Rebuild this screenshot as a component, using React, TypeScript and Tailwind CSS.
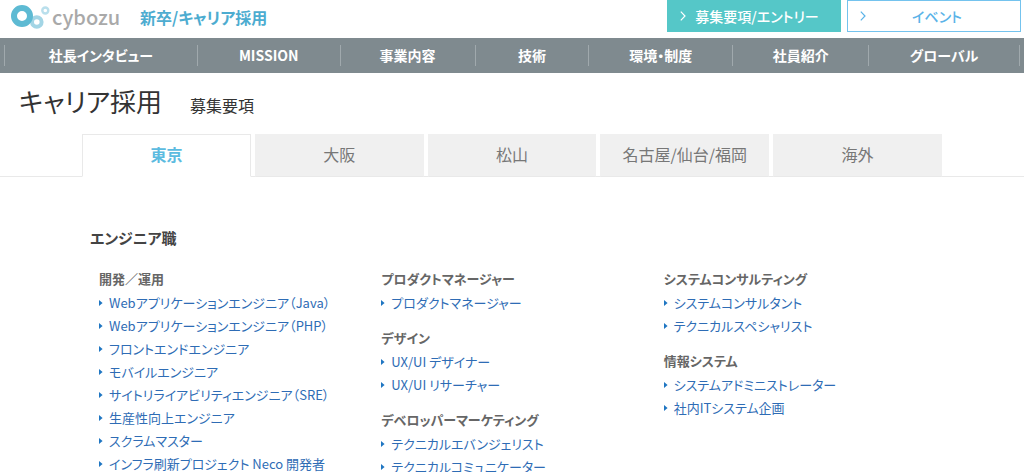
const navItems = ["社長インタビュー", "MISSION", "事業内容", "技術", "環境・制度", "社員紹介", "グローバル"];

const tabs = ["東京", "大阪", "松山", "名古屋/仙台/福岡", "海外"];

type Group = { title: string; links: string[] };

const columns: Group[][] = [
  [
    {
      title: "開発／運用",
      links: [
        "Webアプリケーションエンジニア（Java）",
        "Webアプリケーションエンジニア（PHP）",
        "フロントエンドエンジニア",
        "モバイルエンジニア",
        "サイトリライアビリティエンジニア（SRE）",
        "生産性向上エンジニア",
        "スクラムマスター",
        "インフラ刷新プロジェクト Neco 開発者",
      ],
    },
  ],
  [
    { title: "プロダクトマネージャー", links: ["プロダクトマネージャー"] },
    { title: "デザイン", links: ["UX/UI デザイナー", "UX/UI リサーチャー"] },
    {
      title: "デベロッパーマーケティング",
      links: ["テクニカルエバンジェリスト", "テクニカルコミュニケーター"],
    },
  ],
  [
    {
      title: "システムコンサルティング",
      links: ["システムコンサルタント", "テクニカルスペシャリスト"],
    },
    {
      title: "情報システム",
      links: ["システムアドミニストレーター", "社内ITシステム企画"],
    },
  ],
];

function Logo() {
  return (
    <a href="#" className="flex items-center gap-0.5 text-[#a9a9a9]">
      <svg width="40" height="26" viewBox="0 0 40 26" fill="none" aria-hidden="true">
        <circle cx="26.8" cy="18" r="4.8" stroke="#a3d5e5" strokeWidth="4" />
        <circle cx="12" cy="12" r="8" stroke="#5dbad3" strokeWidth="6" />
        <circle cx="35.3" cy="6.5" r="3" stroke="#b9dfec" strokeWidth="2.4" />
      </svg>
      <span className="text-[20px] leading-6 font-medium">cybozu</span>
    </a>
  );
}

function Chevron() {
  return (
    <svg width="6" height="10" viewBox="0 0 6 10" fill="none" stroke="currentColor" strokeWidth="1.2" aria-hidden="true">
      <path d="M0.8 0.6 5 5 0.8 9.4" />
    </svg>
  );
}

function HeaderButton({ label, filled }: { label: string; filled?: boolean }) {
  return (
    <a
      href="#"
      className={
        "flex h-8 w-[174px] items-center border px-3 text-[14px] font-medium " +
        (filled ? "border-[#55c7c8] bg-[#55c7c8] text-white" : "border-[#74c3ee] bg-white text-[#5ab3e8]")
      }
    >
      <Chevron />
      <span className="flex-1 text-center">{label}</span>
    </a>
  );
}

function JobGroup({ title, links }: Group) {
  return (
    <section className="mb-3 last:mb-0">
      <h3 className="text-[13px] leading-6 font-bold text-[#666]">{title}</h3>
      <ul>
        {links.map((link) => (
          <li key={link}>
            <a href="#" className="flex items-center gap-1.5 text-[13px] leading-[23px] whitespace-nowrap text-[#2e6cb5]">
              <svg width="4" height="6" viewBox="0 0 4 6" className="fill-[#1f76c2]" aria-hidden="true">
                <path d="M0 0 3.6 3 0 6Z" />
              </svg>
              {link}
            </a>
          </li>
        ))}
      </ul>
    </section>
  );
}

export default function App() {
  return (
    <div className="bg-white font-['Noto_Sans_CJK_JP',sans-serif] text-[#333] [font-feature-settings:'palt']">
      <header>
        <div className="flex h-[38px] items-start justify-between pr-[3px] pl-2.5">
          <div className="flex items-center gap-5 pt-1">
            <Logo />
            <p className="text-[16px] leading-6 font-bold text-[#4dacd0]">新卒/キャリア採用</p>
          </div>
          <div className="flex gap-1.5">
            <HeaderButton label="募集要項/エントリー" filled />
            <HeaderButton label="イベント" />
          </div>
        </div>
        <nav className="bg-[#7f8a8f] px-1 py-[7px]">
          <ul className="grid grid-cols-[193fr_143fr_135fr_114fr_144fr_136fr_151fr] border-l border-[#a0a9ad]">
            {navItems.map((item) => (
              <li key={item} className="border-r border-[#a0a9ad] text-center">
                <a href="#" className="block text-[14px] leading-[21px] font-bold whitespace-nowrap text-white">
                  {item}
                </a>
              </li>
            ))}
          </ul>
        </nav>
      </header>

      <main>
        <h1 className="flex items-baseline gap-7 px-[19px] pt-2.5 pb-[11px] text-[26px] leading-9 font-normal">
          キャリア採用
          <span className="text-[16px]">募集要項</span>
        </h1>

        <div className="border-b border-[#e9e9e9]">
          <div role="tablist" className="mx-auto -mb-px grid max-w-[860px] grid-cols-5 gap-1">
            {tabs.map((tab, i) => (
              <button
                key={tab}
                type="button"
                role="tab"
                aria-selected={i === 0}
                className={
                  "h-[43px] border pb-1 text-[16px] whitespace-nowrap " +
                  (i === 0
                    ? "border-[#e9e9e9] border-b-white bg-white font-bold text-[#5cbbe0]"
                    : "border-[#f0f0f0] border-b-[#e9e9e9] bg-[#f0f0f0] text-[#777]")
                }
              >
                {tab}
              </button>
            ))}
          </div>
        </div>

        <div className="mx-auto max-w-[860px] pt-[49px] pl-2">
          <h2 className="text-[15px] leading-6 font-bold text-[#444]">エンジニア職</h2>
          <div className="-mr-1 grid grid-cols-3 pt-[17px] pl-[9px]">
            {columns.map((groups) => (
              <div key={groups[0].title}>
                {groups.map((group) => (
                  <JobGroup key={group.title} {...group} />
                ))}
              </div>
            ))}
          </div>
        </div>
      </main>
    </div>
  );
}
